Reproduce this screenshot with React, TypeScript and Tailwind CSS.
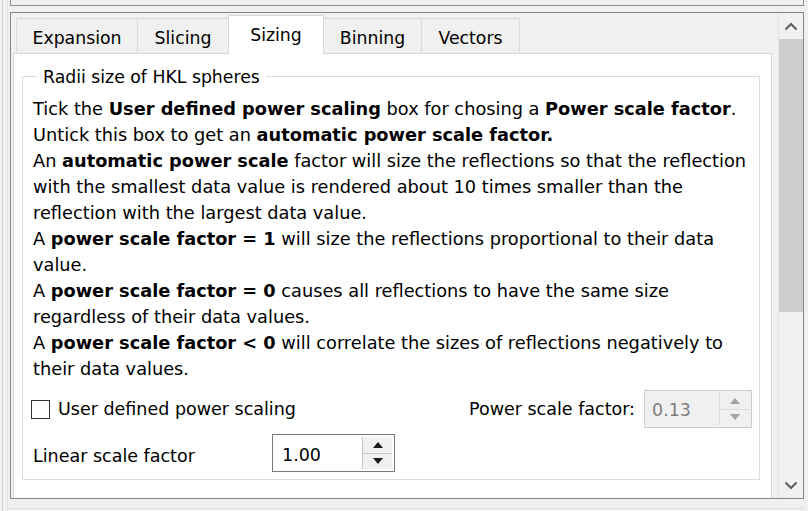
import React from "react";

const font = { fontFamily: '"DejaVu Sans", Verdana, sans-serif' };

function Tab({ label, w, selected }: { label: string; w: string; selected?: boolean }) {
  if (selected) {
    return (
      <div className={`${w} h-[39px] -mb-px bg-white border border-[#d9d9d9] border-b-0 flex items-center justify-center text-[17.3px] text-black relative z-10`}>
        <span className="mt-[2px]">{label}</span>
      </div>
    );
  }
  return (
    <div className={`${w} h-[35px] bg-[#f0f0f0] border border-[#d9d9d9] border-b-0 -ml-px first:ml-0 flex items-center justify-center text-[17.3px] text-black`}>
      <span className="mt-[6px]">{label}</span>
    </div>
  );
}

function SpinArrows({ disabled }: { disabled?: boolean }) {
  const c = disabled ? "#a3a3a3" : "#1a1a1a";
  const bd = disabled ? "border-[#dcdcdc]" : "border-[#c4c4c4]";
  return (
    <div className={`flex flex-col w-[30px] h-full border-l ${bd}`}>
      <div className={`flex-1 flex items-center justify-center border-b ${bd} bg-[#f0f0f0]`}>
        <svg width="10" height="6" viewBox="0 0 10 6"><path d="M0 6 L5 0 L10 6 Z" fill={c} /></svg>
      </div>
      <div className="flex-1 flex items-center justify-center bg-[#f0f0f0]">
        <svg width="10" height="6" viewBox="0 0 10 6"><path d="M0 0 L10 0 L5 6 Z" fill={c} /></svg>
      </div>
    </div>
  );
}

export default function App() {
  const lines: React.ReactNode[] = [
    <>Tick the <b>User defined power scaling</b> box for chosing a <b>Power scale factor</b>.</>,
    <>Untick this box to get an <b>automatic power scale factor.</b></>,
    <>An <b>automatic power scale</b> factor will size the reflections so that the reflection</>,
    <>with the smallest data value is rendered about 10 times smaller than the</>,
    <>reflection with the largest data value.</>,
    <>A <b>power scale factor = 1</b> will size the reflections proportional to their data</>,
    <>value.</>,
    <>A <b>power scale factor = 0</b> causes all reflections to have the same size</>,
    <>regardless of their data values.</>,
    <>A <b>power scale factor &lt; 0</b> will correlate the sizes of reflections negatively to</>,
    <>their data values.</>,
  ];

  return (
    <div className="w-[808px] h-[511px] bg-[#f0f0f0] overflow-hidden flex" style={font}>
      {/* left edge lines */}
      <div className="w-[10px] h-full flex">
        <div className="w-[2px]" />
        <div className="w-px h-full bg-[#d4d4d4]" />
        <div className="w-[4px]" />
        <div className="w-px h-full bg-[#e3e3e3]" />
      </div>
      <div className="flex flex-col w-[794px]">
        {/* remnant of upper widget */}
        <div className="h-[6px] border-l border-r border-b border-[#8c8c8c] bg-[#f0f0f0]" />
        <div className="h-[6px]" />
        {/* scroll area frame */}
        <div className="h-[487px] border border-[#828790] flex bg-[#f0f0f0]">
          <div className="flex-1 overflow-hidden pl-[2px] pt-[1px]">
            {/* tab bar */}
            <div className="flex items-end h-[39px] pl-[3px]">
              <Tab label="Expansion" w="w-[122px]" />
              <Tab label="Slicing" w="w-[92px]" />
              <Tab label="Sizing" w="w-[96px] -ml-px" selected />
              <Tab label="Binning" w="w-[99px] -ml-px" />
              <Tab label="Vectors" w="w-[99px]" />
            </div>
            {/* panel */}
            <div className="w-[759px] h-[470px] bg-white border border-[#d9d9d9] pt-[22px] pl-[8px]">
              <div className="relative w-[738px] h-[404px] border border-[#dcdcdc]">
                <div className="absolute -top-[11px] left-[14px] bg-white px-[6px] text-[17.3px] leading-[22px] text-black">
                  Radii size of HKL spheres
                </div>
                <div className="pt-[19px] pl-[10px] text-[17.75px] leading-[26px] text-black whitespace-nowrap">
                  {lines.map((l, i) => (
                    <div key={i}>{l}</div>
                  ))}
                </div>
                {/* checkbox row */}
                <div className="flex items-center justify-between mt-[8px] pl-[8px] pr-[7px] h-[38px]">
                  <div className="flex items-center text-[17.5px] text-black">
                    <div className="w-[19px] h-[19px] border border-[#333] bg-white mr-[8px]" />
                    <span className="mt-[1px]">User defined power scaling</span>
                  </div>
                  <div className="flex items-center text-[17.5px] text-black">
                    <span className="mr-[9px] mt-[1px]">Power scale factor:</span>
                    <div className="w-[108px] h-[38px] border border-[#cccccc] bg-[#f0f0f0] flex p-[2px]">
                      <div className="flex-1 flex items-center pl-[5px] pt-[2px] text-[#7f7f7f] text-[17.5px]">0.13</div>
                      <SpinArrows disabled />
                    </div>
                  </div>
                </div>
                {/* linear row */}
                <div className="flex items-center mt-[6px] pl-[10px] h-[38px]">
                  <span className="w-[239px] text-[17.5px] text-black mt-[6px]">Linear scale factor</span>
                  <div className="w-[123px] h-[38px] border border-[#7a7a7a] bg-white flex p-[2px]">
                    <div className="flex-1 flex items-center pl-[7px] pt-[5px] text-black text-[17.5px]">1.00</div>
                    <SpinArrows />
                  </div>
                </div>
              </div>
            </div>
          </div>
          {/* scrollbar */}
          <div className="w-[25px] h-full flex flex-col bg-[#f0f0f0] border-l border-[#e6e6e6]">
            <div className="h-[26px] flex items-center justify-center">
              <svg width="14" height="9" viewBox="0 0 14 9"><path d="M1.5 7.5 L7 2 L12.5 7.5" stroke="#606060" strokeWidth="2.2" fill="none" /></svg>
            </div>
            <div className="h-[273px] bg-[#cdcdcd]" />
            <div className="flex-1" />
            <div className="h-[26px] flex items-center justify-center">
              <svg width="14" height="9" viewBox="0 0 14 9"><path d="M1.5 1.5 L7 7 L12.5 1.5" stroke="#606060" strokeWidth="2.2" fill="none" /></svg>
            </div>
          </div>
        </div>
        <div className="h-[9px]" />
        <div className="h-px bg-[#dedede]" />
      </div>
    </div>
  );
}
